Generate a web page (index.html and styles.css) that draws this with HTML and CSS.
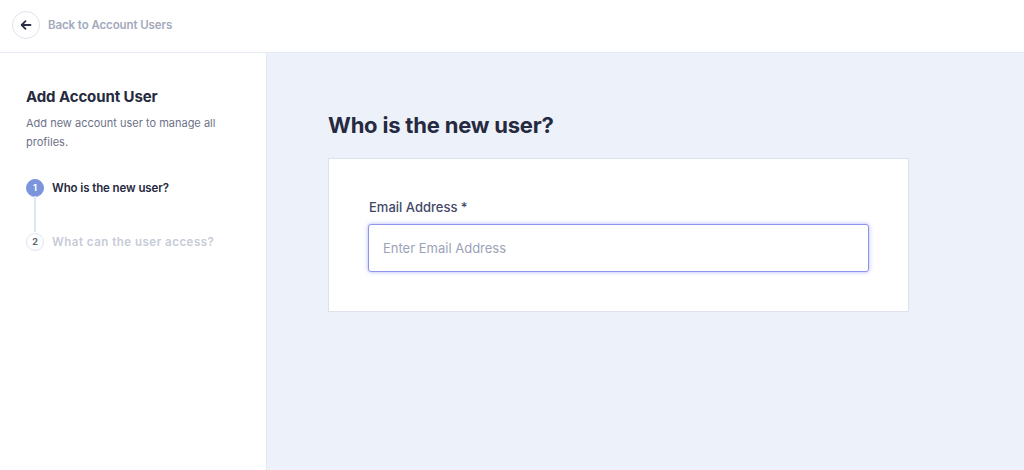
FILE: index.html
```html
<!DOCTYPE html>
<html lang="en">
<head>
    <meta charset="UTF-8">
    <meta name="viewport" content="width=device-width, initial-scale=1.0">
    <title>Add Account User</title>
    <link rel="stylesheet" href="styles.css">
</head>
<body>
    <div class="topbar">
        <a class="back-btn" href="#">
            <svg width="12" height="12" viewBox="0 0 12 12" fill="none" stroke="#2b2f45" stroke-width="1.8" stroke-linecap="round" stroke-linejoin="round">
                <path d="M10.5 6H1.8"/>
                <path d="M5.5 2.2L1.7 6l3.8 3.8"/>
            </svg>
        </a>
        <span class="back-text">Back to Account Users</span>
    </div>

    <div class="layout">
        <aside class="sidebar">
            <h2>Add Account User</h2>
            <p class="desc">Add new account user to manage all profiles.</p>

            <ul class="steps">
                <li class="step active">
                    <span class="num">1</span>
                    <span class="label">Who is the new user?</span>
                </li>
                <li class="step">
                    <span class="num">2</span>
                    <span class="label">What can the user access?</span>
                </li>
            </ul>
        </aside>

        <main class="main">
            <h1>Who is the new user?</h1>
            <div class="card">
                <label for="email">Email Address *</label>
                <input type="text" id="email" placeholder="Enter Email Address">
            </div>
        </main>
    </div>
</body>
</html>
```

FILE: styles.css
```css
* {
    box-sizing: border-box;
}
body {
    margin: 0;
    font-family: 'Inter', 'Liberation Sans', sans-serif;
    color: #2b2f45;
    background-color: #edf1f9;
    height: 470px;
    overflow: hidden;
}
.topbar {
    height: 53px;
    background-color: #fff;
    border-bottom: 1px solid #e6eaf2;
    display: flex;
    align-items: center;
    padding: 0 0 3px 12px;
}
.back-btn {
    width: 28px;
    height: 28px;
    border-radius: 50%;
    border: 1px solid #dfe3ec;
    display: flex;
    align-items: center;
    justify-content: center;
    background-color: #fff;
}
.back-text {
    margin-left: 8px;
    font-size: 11.5px;
    font-weight: 600;
    color: #a3a9bb;
    letter-spacing: -0.1px;
}
.layout {
    display: flex;
    height: 417px;
}
.sidebar {
    width: 267px;
    background-color: #fff;
    border-right: 1px solid #e4e8f0;
    padding: 34px 26px;
}
.sidebar h2 {
    margin: 0;
    font-size: 15px;
    font-weight: 700;
    color: #262a40;
    letter-spacing: -0.1px;
}
.desc {
    margin: 8px 0 0;
    font-size: 11px;
    line-height: 19px;
    color: #6d7389;
    width: 200px;
}
.steps {
    list-style: none;
    padding: 0;
    margin: 26px 0 0;
}
.step {
    display: flex;
    align-items: center;
    position: relative;
    height: 19px;
}
.step + .step {
    margin-top: 35px;
}
.step .num {
    width: 18px;
    height: 18px;
    border-radius: 50%;
    border: 1px solid #dde4f2;
    background-color: #fff;
    color: #5d6379;
    font-size: 9px;
    font-weight: 700;
    display: flex;
    align-items: center;
    justify-content: center;
    flex-shrink: 0;
}
.step .label {
    margin-left: 8px;
    font-size: 11.5px;
    font-weight: 600;
    color: #c7cbd6;
    letter-spacing: 0.5px;
}
.step.active .num {
    background-color: #7b95dc;
    border-color: #7b95dc;
    color: #fff;
}
.step.active .label {
    color: #262a40;
    letter-spacing: -0.1px;
}
.step.active::after {
    content: '';
    position: absolute;
    left: 8px;
    top: 18px;
    width: 2px;
    height: 36px;
    background-color: #dce7f6;
}
.main {
    flex: 1;
    padding: 59px 0 0 61px;
}
.main h1 {
    margin: 0;
    font-size: 22px;
    font-weight: 700;
    color: #262a40;
    letter-spacing: -0.2px;
}
.card {
    margin-top: 20px;
    width: 581px;
    background-color: #fff;
    border: 1px solid #dde2ec;
    padding: 40px 39px 39px 39px;
}
.card label {
    display: block;
    font-size: 13px;
    font-weight: 500;
    color: #43486a;
    margin-bottom: 9px;
    padding-left: 1px;
}
.card input {
    width: 501px;
    height: 48px;
    border: 1.5px solid #8d93ef;
    border-radius: 3px;
    box-shadow: 0 0 4px rgba(120, 130, 240, 0.6);
    padding: 0 14px;
    font-family: inherit;
    font-size: 13px;
    color: #2b2f45;
    outline: none;
}
.card input::placeholder {
    color: #9ca2b8;
}
```
